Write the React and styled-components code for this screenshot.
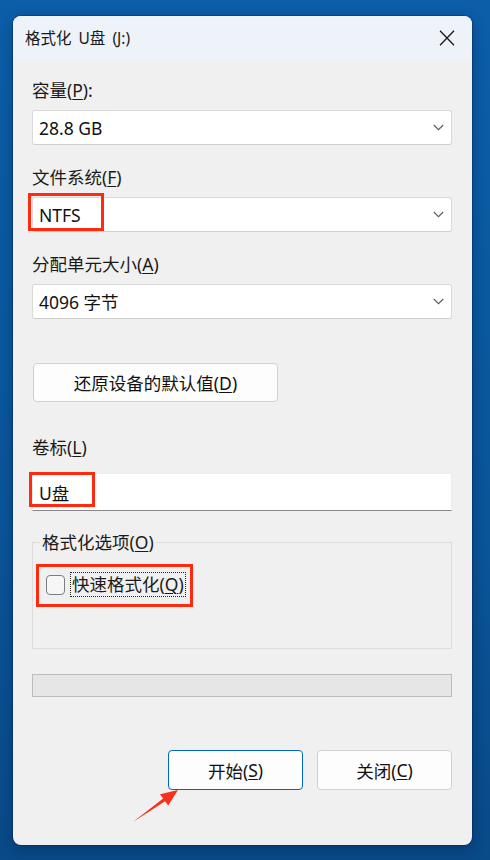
import React from "react";
import styled, { createGlobalStyle } from "styled-components";

const GlobalStyle = createGlobalStyle`
  html, body { margin: 0; padding: 0; }
  body {
    width: 490px;
    height: 860px;
    overflow: hidden;
    background: linear-gradient(180deg, #0b5ea8 0%, #0a5599 60%, #094a88 100%);
    font-family: "Noto Sans", "Noto Sans CJK SC", sans-serif;
    color: #1b1b1b;
  }
  * { box-sizing: border-box; }
`;

const Desktop = styled.div`
  padding: 16px 18px 0 13px;
`;

const Window = styled.div`
  position: relative;
  width: 459px;
  border-radius: 8px;
  overflow: hidden;
  background: #f0f0f0;
  box-shadow: 0 0 0 1px rgba(0, 30, 70, 0.35), 0 4px 14px rgba(0, 20, 60, 0.35);
`;

const TitleBar = styled.div`
  height: 43px;
  display: flex;
  align-items: center;
  justify-content: space-between;
  padding: 0 17px 0 12px;
  background: #eef3f9;
  font-size: 15.5px;
  word-spacing: 3px;
  color: #1a1a1a;
`;

const CloseIcon = styled.svg`
  width: 16px;
  height: 16px;
  display: block;
`;

const Body = styled.div`
  display: flex;
  flex-direction: column;
  padding: 19px 20px 55px 19px;
  font-size: 17.5px;
`;

const Label = styled.div`
  line-height: 24px;
  height: 24px;
  margin-top: ${(p) => p.$mt || 0}px;
  white-space: nowrap;
`;

const Key = styled.u`
  text-underline-offset: 2px;
  text-decoration-thickness: 1px;
`;

const Field = styled.div`
  position: relative;
  margin-top: ${(p) => p.$mt || 0}px;
`;

const Combo = styled.div`
  height: 35px;
  display: flex;
  align-items: center;
  justify-content: space-between;
  padding: 0 7px 0 6px;
  background: #ffffff;
  border: 1px solid #d9d9d9;
  border-bottom-color: #cfcfcf;
  border-radius: 3px;
  color: #111;
`;

const Chevron = styled.svg`
  width: 11px;
  height: 7px;
  display: block;
`;

const TextBox = styled.div`
  height: 38px;
  display: flex;
  align-items: center;
  padding: 0 6px;
  background: #ffffff;
  border: 1px solid #ececec;
  border-bottom: 1px solid #878787;
  border-radius: 2px 2px 0 0;
  color: #111;
`;

const Highlight = styled.div`
  position: absolute;
  left: ${(p) => p.$x}px;
  top: ${(p) => p.$y}px;
  width: ${(p) => p.$w}px;
  height: ${(p) => p.$h}px;
  border: 3px solid #ff2a10;
  pointer-events: none;
`;

const Button = styled.button`
  height: ${(p) => p.$h || 40}px;
  width: ${(p) => p.$w}px;
  margin: ${(p) => p.$m || 0};
  padding: 0;
  font: inherit;
  font-size: 17.5px;
  color: #111;
  background: #fdfdfd;
  border: 1px solid ${(p) => (p.$primary ? "#0067c0" : "#d0d0d0")};
  border-radius: 4px;
  display: flex;
  align-items: center;
  justify-content: center;
`;

const Group = styled.fieldset`
  position: relative;
  margin: 19px 0 0 0;
  padding: 18px 13px 51px 13px;
  border: 1px solid #dcdcdc;
  min-width: 0;
`;

const Legend = styled.legend`
  margin-left: -6px;
  padding: 0 2px;
  line-height: 24px;
  font-size: 17.5px;
`;

const CheckRow = styled.div`
  position: relative;
  height: 25px;
  display: flex;
  align-items: center;
  gap: 5px;
`;

const CheckBox = styled.span`
  width: 19px;
  height: 20px;
  border: 1px solid #7d7d7d;
  border-radius: 4px;
  background: #f6f6f6;
  flex: none;
`;

const CheckLabel = styled.span`
  height: 25px;
  line-height: 23px;
  padding: 0 1px;
  border: 1px dotted #222;
  white-space: nowrap;
`;

const Progress = styled.div`
  height: 23px;
  margin-top: 25px;
  background: #e6e6e6;
  border: 1px solid #bcbcbc;
`;

const ButtonRow = styled.div`
  display: flex;
  justify-content: flex-end;
  gap: 14px;
  margin-top: 53px;
`;

const Arrow = styled.svg`
  position: absolute;
  left: 110px;
  top: 765px;
  width: 60px;
  height: 50px;
  pointer-events: none;
`;

const ChevronDown = () => (
  <Chevron viewBox="0 0 11 7">
    <polyline points="0.8,1 5.5,5.7 10.2,1" fill="none" stroke="#5a5a5a" strokeWidth="1.1" />
  </Chevron>
);

export default function App() {
  return (
    <>
      <GlobalStyle />
      <Desktop>
        <Window>
          <TitleBar>
            <span>格式化 U盘 (J:)</span>
            <CloseIcon viewBox="0 0 16 16">
              <path d="M1 0.8 L15 15.2 M15 0.8 L1 15.2" stroke="#1a1a1a" strokeWidth="1.3" fill="none" />
            </CloseIcon>
          </TitleBar>
          <Body>
            <Label>
              容量(<Key>P</Key>):
            </Label>
            <Field $mt={8}>
              <Combo>
                <span>28.8 GB</span>
                <ChevronDown />
              </Combo>
            </Field>

            <Label $mt={20}>
              文件系统(<Key>F</Key>)
            </Label>
            <Field $mt={8}>
              <Combo>
                <span>NTFS</span>
                <ChevronDown />
              </Combo>
              <Highlight $x={-4} $y={-4} $w={76} $h={38} />
            </Field>

            <Label $mt={20}>
              分配单元大小(<Key>A</Key>)
            </Label>
            <Field $mt={8}>
              <Combo>
                <span>4096 字节</span>
                <ChevronDown />
              </Combo>
            </Field>

            <Button $w={245} $h={39} $m="44px 0 0 1px">
              还原设备的默认值(<Key>D</Key>)
            </Button>

            <Label $mt={33}>
              卷标(<Key>L</Key>)
            </Label>
            <Field $mt={14}>
              <TextBox>U盘</TextBox>
              <Highlight $x={-3} $y={-1} $w={66} $h={35} />
            </Field>

            <Group>
              <Legend>
                格式化选项(<Key>O</Key>)
              </Legend>
              <CheckRow>
                <CheckBox />
                <CheckLabel>
                  快速格式化(<Key>Q</Key>)
                </CheckLabel>
                <Highlight $x={-10} $y={-8} $w={157} $h={43} />
              </CheckRow>
            </Group>

            <Progress />

            <ButtonRow>
              <Button $w={135} $primary>
                开始(<Key>S</Key>)
              </Button>
              <Button $w={135}>
                关闭(<Key>C</Key>)
              </Button>
            </ButtonRow>
          </Body>
          <Arrow viewBox="0 0 60 50">
            <polygon
              points="10,41 42.1,20.3 45.2,24.6 55,9 37,13.2 40.1,17.5"
              fill="#f9301a"
            />
          </Arrow>
        </Window>
      </Desktop>
    </>
  );
}
